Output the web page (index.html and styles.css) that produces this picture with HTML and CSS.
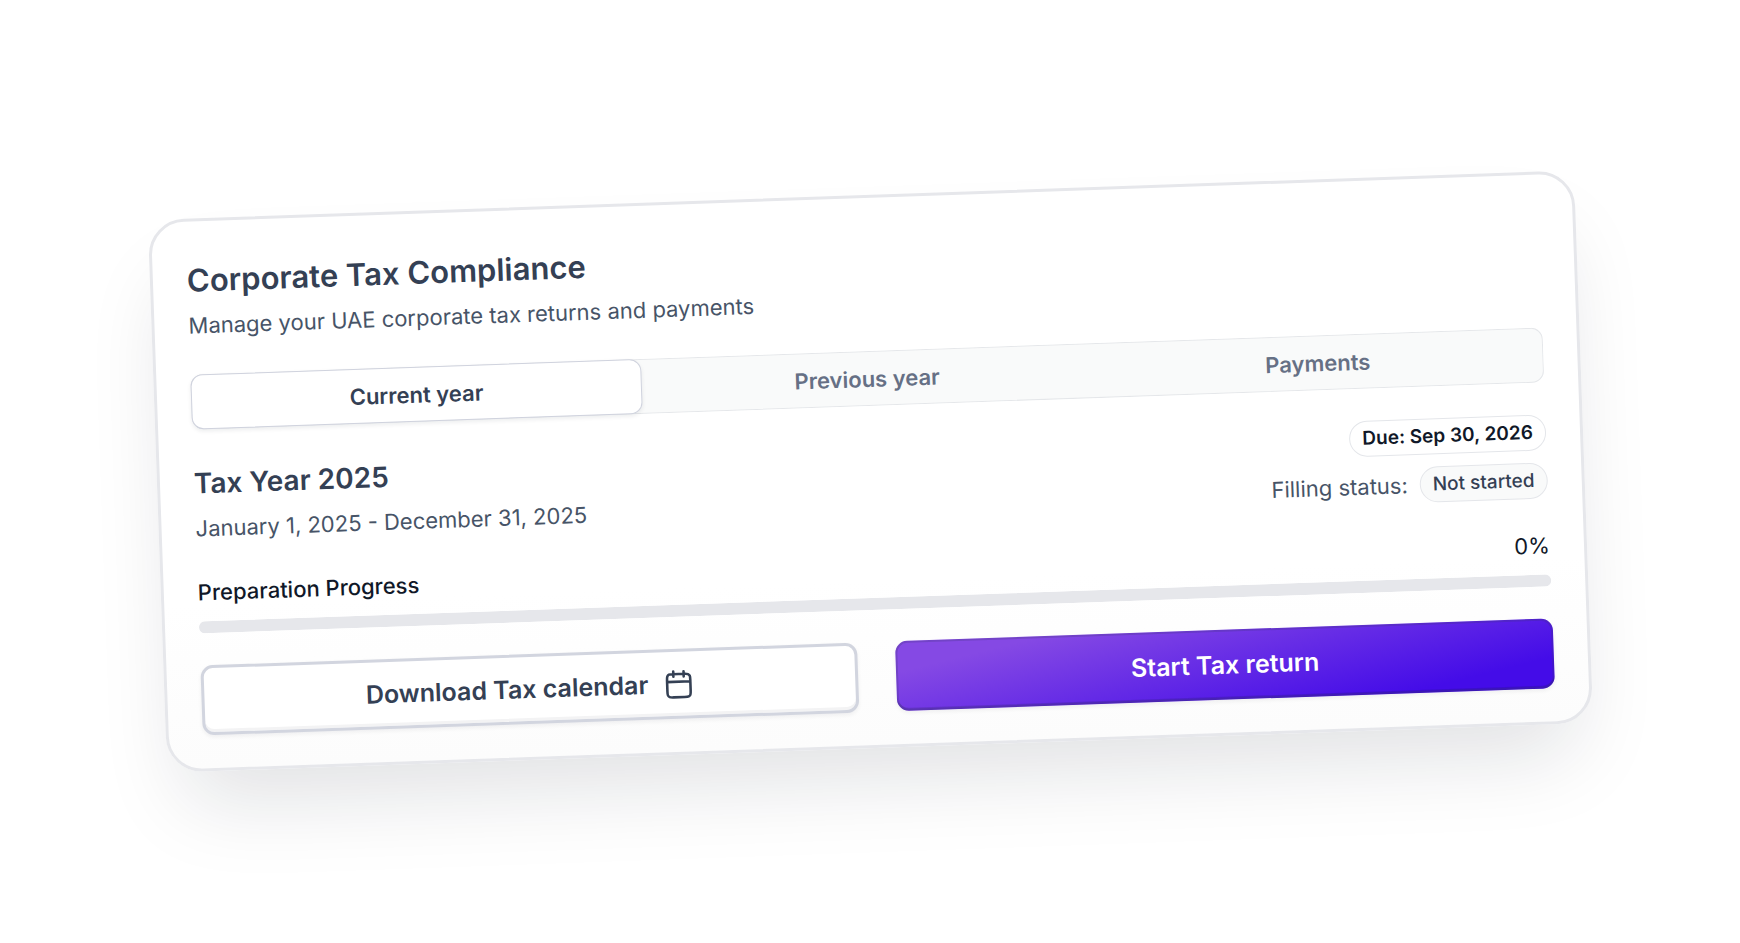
FILE: index.html
```html
<!DOCTYPE html>
<html lang="en">
<head>
<meta charset="utf-8">
<meta name="viewport" content="width=device-width, initial-scale=1">
<title>Corporate Tax Compliance</title>
<link rel="stylesheet" href="styles.css">
</head>
<body>
<main class="stage">
  <section class="card" aria-labelledby="card-title">
    <header class="card-header">
      <h1 class="title" id="card-title">Corporate Tax Compliance</h1>
      <p class="muted">Manage your UAE corporate tax returns and payments</p>
    </header>

    <div class="tabs" role="tablist">
      <button class="tab tab-active" type="button" role="tab" aria-selected="true">Current year</button>
      <button class="tab" type="button" role="tab" aria-selected="false">Previous year</button>
      <button class="tab" type="button" role="tab" aria-selected="false">Payments</button>
    </div>

    <div class="year">
      <div class="year-info">
        <h2 class="year-title">Tax Year 2025</h2>
        <p class="muted">January 1, 2025 - December 31, 2025</p>
      </div>
      <div class="year-status">
        <span class="pill pill-due">Due: Sep 30, 2026</span>
        <div class="status-row">
          <span class="muted">Filling status:</span>
          <span class="pill pill-state">Not started</span>
        </div>
      </div>
    </div>

    <div class="progress">
      <div class="progress-head">
        <label for="preparation">Preparation Progress</label>
        <span class="progress-value">0%</span>
      </div>
      <progress class="progress-bar" id="preparation" value="0" max="100"></progress>
    </div>

    <div class="actions">
      <button class="button button-outline" type="button">
        Download Tax calendar
        <svg class="icon" viewBox="0 0 20 20" fill="none" stroke="currentColor" stroke-width="1.67" stroke-linecap="round" stroke-linejoin="round" aria-hidden="true">
          <path d="M17.5 8.33H2.5M13.33 1.67V5M6.67 1.67V5M6.5 18.33h7c1.4 0 2.1 0 2.64-.27a2.5 2.5 0 0 0 1.09-1.09c.27-.54.27-1.24.27-2.64v-7c0-1.4 0-2.1-.27-2.64a2.5 2.5 0 0 0-1.09-1.09c-.54-.27-1.24-.27-2.64-.27h-7c-1.4 0-2.1 0-2.64.27a2.5 2.5 0 0 0-1.09 1.09c-.27.54-.27 1.24-.27 2.64v7c0 1.4 0 2.1.27 2.64a2.5 2.5 0 0 0 1.09 1.09c.54.27 1.24.27 2.64.27Z"/>
        </svg>
      </button>
      <button class="button button-primary" type="button">Start Tax return</button>
    </div>
  </section>
</main>
</body>
</html>
```

FILE: styles.css
```css
* {
  box-sizing: border-box;
}

body {
  margin: 0;
  background: #fff;
  color: #101828;
  font-family: Inter, "Liberation Sans", sans-serif;
  font-size: 22px;
  line-height: 34px;
}

h1, h2, p {
  margin: 0;
}

button {
  margin: 0;
  font-family: inherit;
  cursor: pointer;
}

.stage {
  display: flex;
  align-items: center;
  justify-content: center;
  min-height: 100vh;
  overflow: hidden;
}

.card {
  display: flex;
  flex-direction: column;
  gap: 32px;
  width: 82%;
  padding: 35px 34px 33px;
  border: 3px solid #e6e7eb;
  border-radius: 36px;
  background: linear-gradient(#fff 70%, #fcfcfc);
  box-shadow: 0 48px 84px -20px rgba(16, 24, 40, 0.13);
  transform: rotate(-2deg);
}

.card-header {
  display: flex;
  flex-direction: column;
  gap: 4px;
}

.title {
  font-size: 31px;
  font-weight: 600;
  line-height: 48px;
  color: #344054;
}

.muted {
  color: #475467;
}

.tabs {
  display: grid;
  grid-template-columns: repeat(3, 1fr);
  border-radius: 12px;
  background: #f9fafa;
  box-shadow: inset 0 0 0 1px #e5e7ea;
}

.tab {
  height: 55px;
  padding: 0 16px;
  border: 0;
  border-radius: 12px;
  background: transparent;
  color: #667085;
  font-size: 22px;
  font-weight: 600;
}

.tab-active {
  border: 1px solid #d0d3de;
  background: #fff;
  color: #344054;
  box-shadow: 0 2px 4px rgba(16, 24, 40, 0.08);
}

.year {
  display: flex;
  justify-content: space-between;
}

.year-info {
  display: flex;
  flex-direction: column;
  gap: 6px;
}

.year-title {
  font-size: 28px;
  font-weight: 600;
  line-height: 44px;
  color: #344054;
}

.year-status {
  display: flex;
  flex-direction: column;
  align-items: flex-end;
  gap: 12px;
}

.status-row {
  display: flex;
  align-items: center;
  gap: 12px;
}

.pill {
  display: inline-flex;
  align-items: center;
  height: 36px;
  padding: 0 12px;
  border: 1px solid #e4e6ea;
  border-radius: 18px;
  font-size: 19px;
}

.pill-due {
  font-weight: 600;
}

.pill-state {
  background: #f9fafa;
  color: #344054;
  font-weight: 500;
}

.progress {
  display: flex;
  flex-direction: column;
  gap: 14px;
}

.progress-head {
  display: flex;
  justify-content: space-between;
  line-height: 30px;
  font-weight: 500;
}

.progress-value {
  font-weight: 400;
}

.progress-bar {
  display: block;
  width: 100%;
  height: 12px;
  border: 0;
  border-radius: 6px;
  background: #e6e7eb;
  overflow: hidden;
  appearance: none;
}

.progress-bar::-webkit-progress-bar {
  background: #e6e7eb;
}

.progress-bar::-webkit-progress-value {
  background: #6a2fe6;
}

.actions {
  display: grid;
  grid-template-columns: 1fr 1fr;
  gap: 38px;
}

.button {
  display: flex;
  align-items: center;
  justify-content: center;
  gap: 15px;
  height: 70px;
  padding: 0 24px;
  border: 0;
  border-radius: 12px;
  font-size: 25px;
  font-weight: 600;
}

.button-outline {
  border: 3px solid #d2d5df;
  background: #fff;
  color: #344054;
  box-shadow: 0 2px 4px rgba(16, 24, 40, 0.06), inset 0 -3px 0 rgba(16, 24, 40, 0.05);
}

.button-primary {
  background: linear-gradient(168deg, #8549e4 15%, #440ce8 85%);
  color: #fff;
  box-shadow: 0 2px 4px rgba(16, 24, 40, 0.06), inset 0 0 0 2px rgba(60, 50, 110, 0.25), inset 0 -3px 0 rgba(16, 24, 40, 0.15);
}

.icon {
  width: 31px;
  height: 31px;
}
```
